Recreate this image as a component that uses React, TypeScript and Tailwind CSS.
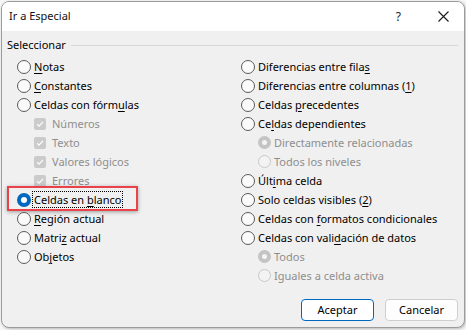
import React from 'react'

type Opt = {
  kind: 'radio' | 'check'
  label: React.ReactNode
  indent?: boolean
  checked?: boolean
  disabled?: boolean
  focus?: boolean
}

const U = ({ children }: { children: React.ReactNode }) => (
  <span className="underline underline-offset-2 decoration-1">{children}</span>
)

const Radio = ({ checked, disabled }: { checked?: boolean; disabled?: boolean }) => {
  if (checked && disabled)
    return (
      <span className="flex w-[13px] h-[13px] shrink-0 items-center justify-center rounded-full bg-[#c4c4c4]">
        <span className="w-[5px] h-[5px] rounded-full bg-[#f4f4f4]" />
      </span>
    )
  if (checked)
    return (
      <span className="flex w-[14px] h-[14px] shrink-0 items-center justify-center rounded-full bg-[#0067c0]">
        <span className="w-[6px] h-[6px] rounded-full bg-white" />
      </span>
    )
  return (
    <span
      className={
        disabled
          ? 'w-[13px] h-[13px] shrink-0 rounded-full border border-[#c8c8c8] bg-[#f3f3f3]'
          : 'w-[14px] h-[14px] shrink-0 rounded-full border border-[#5a5a5a] bg-[#fafafa]'
      }
    />
  )
}

const Check = () => (
  <span className="flex w-[12px] h-[12px] shrink-0 items-center justify-center rounded-[2px] bg-[#cbcbcb]">
    <svg width="8" height="8" viewBox="0 0 8 8" fill="none">
      <path d="M1 4.2 L3 6.2 L7 1.8" stroke="#ffffff" strokeWidth="1.1" />
    </svg>
  </span>
)

const Row = ({ o }: { o: Opt }) => (
  <div className={`relative flex h-[19px] items-center ${o.indent ? 'pl-[17px]' : ''}`}>
    {o.kind === 'radio' ? <Radio checked={o.checked} disabled={o.disabled} /> : <Check />}
    <span
      className={`${o.kind === 'check' ? 'ml-[4px]' : 'ml-[1px]'} px-px leading-[15px] whitespace-nowrap ${
        o.disabled ? 'text-[#8e8e8e]' : 'text-black'
      } ${o.focus ? 'border border-dotted border-black' : 'border border-transparent'}`}
    >
      {o.label}
    </span>
    {o.focus && (
      <span className="absolute left-[-10px] top-[-4px] w-[131px] h-[25px] border-[2.5px] border-[#ea4249] shadow-[0_1px_4px_rgba(0,0,0,0.35)]" />
    )}
  </div>
)

const left: Opt[] = [
  { kind: 'radio', label: <><U>N</U>otas</> },
  { kind: 'radio', label: <><U>C</U>onstantes</> },
  { kind: 'radio', label: <>Celdas con fórm<U>u</U>las</> },
  { kind: 'check', label: 'Números', indent: true, disabled: true },
  { kind: 'check', label: 'Texto', indent: true, disabled: true },
  { kind: 'check', label: 'Valores lógicos', indent: true, disabled: true },
  { kind: 'check', label: 'Errores', indent: true, disabled: true },
  { kind: 'radio', label: <>Celdas en <U>b</U>lanco</>, checked: true, focus: true },
  { kind: 'radio', label: <><U>R</U>egión actual</> },
  { kind: 'radio', label: <>Matri<U>z</U> actual</> },
  { kind: 'radio', label: <>Ob<U>j</U>etos</> },
]

const right: Opt[] = [
  { kind: 'radio', label: <>Diferencias entre fila<U>s</U></> },
  { kind: 'radio', label: <>Diferencias entre columnas (<U>1</U>)</> },
  { kind: 'radio', label: <>Celdas <U>p</U>recedentes</> },
  { kind: 'radio', label: <>Ce<U>l</U>das dependientes</> },
  { kind: 'radio', label: 'Directamente relacionadas', indent: true, disabled: true, checked: true },
  { kind: 'radio', label: 'Todos los niveles', indent: true, disabled: true },
  { kind: 'radio', label: <>Últ<U>i</U>ma celda</> },
  { kind: 'radio', label: <>Solo celdas visibles (<U>2</U>)</> },
  { kind: 'radio', label: <>Celdas con <U>f</U>ormatos condicionales</> },
  { kind: 'radio', label: <>Celdas con vali<U>d</U>ación de datos</> },
  { kind: 'radio', label: 'Todos', indent: true, disabled: true, checked: true },
  { kind: 'radio', label: 'Iguales a celda activa', indent: true, disabled: true },
]

export default function App() {
  return (
    <div className="w-[466px] h-[330px] bg-[#f6f6f6] pl-px pt-px font-['Noto_Sans',sans-serif] text-[11px]">
      <div className="w-[464px] h-[327px] flex flex-col rounded-[8px] border border-[#9c9c9c] bg-[#f0f0f0] overflow-hidden shadow-[1px_1px_3px_rgba(0,0,0,0.25)]">
        <div className="h-[29px] shrink-0 flex items-center bg-white pl-[7px] pr-[15px]">
          <span className="flex-1 text-[#111]">Ir a Especial</span>
          <span className="mr-[37px] text-[12px] text-[#222]">?</span>
          <svg width="11" height="11" viewBox="0 0 11 11" fill="none">
            <path d="M0.5 0.5 L10.5 10.5 M10.5 0.5 L0.5 10.5" stroke="#1a1a1a" strokeWidth="1.1" />
          </svg>
        </div>

        <div className="flex-1 flex flex-col pl-[5px] pr-[6px]">
          <div className="mt-[6px] flex h-[16px] items-center">
            <span className="text-black">Seleccionar</span>
            <span className="ml-[5px] flex-1 h-px bg-[#d8d8d8]" />
          </div>

          <div className="mt-[4px] pl-[10px] flex">
            <div className="w-[224px] flex flex-col">
              {left.map((o, i) => (
                <Row key={i} o={o} />
              ))}
            </div>
            <div className="flex-1 flex flex-col">
              {right.map((o, i) => (
                <Row key={i} o={o} />
              ))}
            </div>
          </div>

          <div className="mt-[14px] flex justify-end gap-[11px]">
            <button className="w-[73px] h-[22px] rounded-[4px] border-[1.5px] border-[#0067c0] bg-white text-black">
              Aceptar
            </button>
            <button className="w-[73px] h-[22px] rounded-[4px] border border-[#cfcfcf] bg-[#fdfdfd] text-black">
              Cancelar
            </button>
          </div>
        </div>
      </div>
    </div>
  )
}
